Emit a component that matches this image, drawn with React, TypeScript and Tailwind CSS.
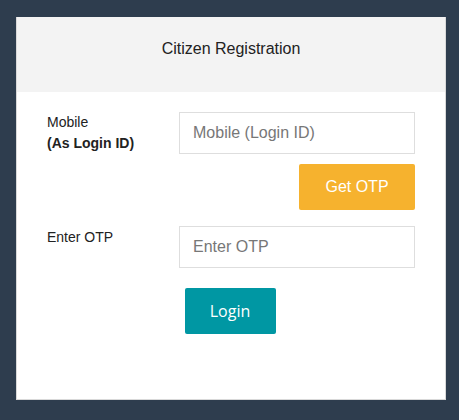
export default function App() {
  return (
    <div className="min-h-[420px] bg-[#2e3d4e] pt-[17px] pl-4 pr-[14px] font-['Liberation_Sans',Arial,sans-serif]">
      <div className="w-[430px] h-[383px] bg-white border border-t-0 border-[#d9d9d9]">
        {/* Header */}
        <div className="h-[75px] bg-[#f3f3f3] flex items-center justify-center">
          <h1 className="text-[16px] text-[#222] pb-[12px]">Citizen Registration</h1>
        </div>

        {/* Form */}
        <div className="pt-[20px] pl-[30px]">
          <div className="grid grid-cols-[132px_236px]">
            <div className="text-[14px] leading-[21px] text-[#222]">
              <div>Mobile</div>
              <div className="font-bold">(As Login ID)</div>
            </div>
            <div className="flex flex-col items-end">
              <input
                type="text"
                placeholder="Mobile (Login ID)"
                className="w-full h-[42px] border border-[#dedede] px-[13px] text-[16px] text-[#333] placeholder:text-[#777] outline-none"
              />
              <button className="mt-[10px] w-[116px] h-[46px] rounded-[2px] bg-[#f6b22e] text-white text-[16px]">
                Get OTP
              </button>
            </div>

            <div className="mt-[16px] pt-[1px] text-[14px] leading-[21px] text-[#222]">Enter OTP</div>
            <div className="mt-[16px]">
              <input
                type="text"
                placeholder="Enter OTP"
                className="w-full h-[42px] border border-[#dedede] px-[13px] text-[16px] text-[#333] placeholder:text-[#777] outline-none"
              />
            </div>
          </div>
        </div>

        <div className="flex justify-center mt-[20px] pr-[2px]">
          <button className="w-[91px] h-[46px] rounded-[2px] bg-[#0097a3] text-white text-[16px] font-['Open_Sans',sans-serif]">
            Login
          </button>
        </div>
      </div>
    </div>
  );
}
